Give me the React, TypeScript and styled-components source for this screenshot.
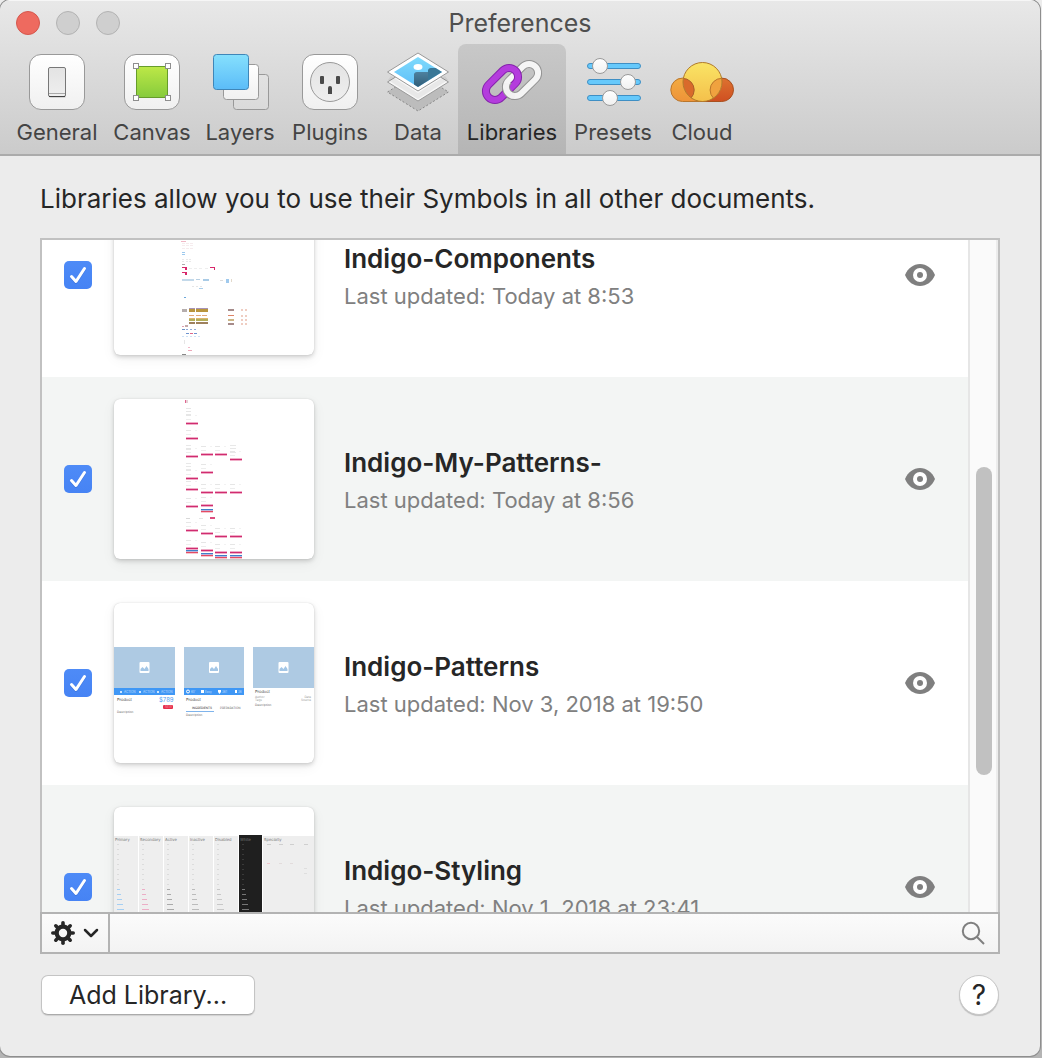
import React, { useLayoutEffect, useRef } from "react";
import styled, { createGlobalStyle } from "styled-components";

const GlobalStyle = createGlobalStyle`
  *, *::before, *::after { box-sizing: border-box; }
  body {
    margin: 0;
    font-family: Inter, "Liberation Sans", sans-serif;
    color: #262626;
    background: #b4b4b4;
  }
  button, input { font: inherit; color: inherit; }
`;

const Desktop = styled.div`
  min-height: 100vh;
  display: flex;
  padding: 0 2px 2px 0;
  background: linear-gradient(#ececec 0 50px, #b4b4b4 50px);
`;

const Window = styled.main`
  flex: 1;
  min-width: 0;
  display: flex;
  flex-direction: column;
  overflow: hidden;
  background: #ececec;
  border-radius: 10px;
  box-shadow: 0 0 0 1px #8e8e8e;
`;

const Header = styled.header`
  background: linear-gradient(#e8e8e8, #cbcbcb);
  border-top: 1px solid #f6f6f6;
  border-bottom: 2px solid #ababab;
`;

const TitleBar = styled.div`
  display: grid;
  grid-template-columns: 1fr auto 1fr;
  align-items: center;
  height: 43px;
  padding: 0 16px;
`;

const Lights = styled.div`
  display: flex;
  gap: 16px;
`;

const Light = styled.button<{ $fill: string; $edge: string }>`
  width: 24px;
  height: 24px;
  padding: 0;
  border-radius: 50%;
  border: 1px solid ${(p) => p.$edge};
  background: ${(p) => p.$fill};
`;

const WindowTitle = styled.h1`
  margin: 0;
  font-size: 25px;
  line-height: 32px;
  font-weight: 400;
  color: #4f4f4f;
`;

const Toolbar = styled.nav`
  display: flex;
  padding-left: 8px;
`;

const Tab = styled.button<{ $width: number; $active?: boolean }>`
  width: ${(p) => p.$width}px;
  height: 110px;
  padding: 6px 0 8px;
  border: 0;
  border-radius: 8px 8px 0 0;
  display: flex;
  flex-direction: column;
  align-items: center;
  gap: 4px;
  font-size: 22px;
  line-height: 28px;
  white-space: nowrap;
  color: ${(p) => (p.$active ? "#262626" : "#444444")};
  background: ${(p) => (p.$active ? "linear-gradient(#c8c8c8, #b5b5b5)" : "none")};
`;

const Content = styled.section`
  flex: 1;
  min-height: 0;
  display: flex;
  flex-direction: column;
  padding: 26px 40px 40px;
`;

const Intro = styled.p`
  margin: 0 0 22px;
  font-size: 26px;
  line-height: 34px;
`;

const ListFrame = styled.div`
  height: calc(100vh - 384px);
  min-height: 204px;
  display: flex;
  border: 2px solid #c1c1c1;
  border-bottom: 0;
  background: #ffffff;
`;

const Rows = styled.ul`
  flex: 1;
  min-width: 0;
  margin: 0;
  padding: 0;
  list-style: none;
  overflow: hidden;
`;

const Row = styled.li`
  display: flex;
  align-items: center;
  padding: 22px 33px 22px 22px;
  background: #ffffff;
  &:nth-child(even) { background: #f3f5f4; }
`;

const CheckLabel = styled.label`
  display: grid;
  margin-right: 22px;
  > * { grid-area: 1 / 1; }
  svg { pointer-events: none; }
`;

const CheckInput = styled.input`
  appearance: none;
  width: 28px;
  height: 28px;
  margin: 0;
  border-radius: 5px;
  background: #e2e2e2;
  &:checked { background: linear-gradient(#4e8bf7, #4683f4); }
`;

const Preview = styled.div`
  flex: none;
  width: 200px;
  height: 160px;
  border-radius: 6px;
  overflow: hidden;
  background: #ffffff;
  box-shadow: 0 0 1px rgba(0, 0, 0, 0.2), 0 2px 4px rgba(0, 0, 0, 0.16), 0 4px 14px rgba(0, 0, 0, 0.06);
  svg { display: block; }
`;

const Details = styled.div`
  flex: 1;
  min-width: 0;
  margin-left: 30px;
  padding-top: 2px;
`;

const Name = styled.h2`
  margin: 0;
  font-size: 26px;
  line-height: 40px;
  font-weight: 600;
`;

const Updated = styled.p`
  margin: 0;
  font-size: 22px;
  line-height: 34px;
  color: #808080;
`;

const IconButton = styled.button`
  display: flex;
  padding: 0;
  border: 0;
  background: none;
`;

const Track = styled.div`
  width: 30px;
  padding: 0 4px 0 6px;
  border-left: 2px solid #e6e6e6;
  border-right: 2px solid #ececec;
  background: #fafafa;
`;

const Knob = styled.div`
  width: 16px;
  border-radius: 8px;
  background: #c1c1c1;
`;

const Footer = styled.div`
  display: flex;
  align-items: stretch;
  height: 42px;
  border: 2px solid #b3b3b3;
  background: linear-gradient(#fbfbfb, #f3f3f3);
`;

const MenuButton = styled.button`
  display: flex;
  align-items: center;
  gap: 7px;
  width: 68px;
  padding: 0 8px;
  border: 0;
  border-right: 2px solid #b3b3b3;
  background: none;
`;

const SearchLabel = styled.label`
  flex: 1;
  display: flex;
  align-items: center;
  padding-right: 13px;
`;

const SearchInput = styled.input`
  flex: 1;
  min-width: 0;
  height: 100%;
  padding: 0 12px;
  border: 0;
  outline: 0;
  font-size: 22px;
  background: none;
`;

const Actions = styled.div`
  display: flex;
  align-items: center;
  justify-content: space-between;
  margin-top: 21px;
  padding: 0 1px;
`;

const AddButton = styled.button`
  width: 214px;
  height: 40px;
  padding: 0;
  border: 1px solid #c4c4c4;
  border-bottom-color: #ababab;
  border-radius: 7px;
  font-size: 25px;
  line-height: 38px;
  background: #ffffff;
  box-shadow: 0 1px 1px rgba(0, 0, 0, 0.12);
`;

const HelpButton = styled.button`
  width: 40px;
  height: 40px;
  padding: 0;
  border: 1px solid #c8c8c8;
  border-radius: 50%;
  font-size: 28px;
  line-height: 38px;
  background: #ffffff;
  box-shadow: 0 1px 1px rgba(0, 0, 0, 0.2);
`;

/* ---------- toolbar icons ---------- */

const ToolIcon = ({ children }: { children: React.ReactNode }) => (
  <svg width="64" height="64" viewBox="0 0 64 64" fill="none" aria-hidden="true">
    {children}
  </svg>
);

const GradientStore = styled.svg`
  position: absolute;
`;

const Gradients = () => (
  <GradientStore width="0" height="0" aria-hidden="true">
    <defs>
      {[
        ["tile", "#ffffff", "#f0f0f0"],
        ["green", "#bde847", "#86cb3c"],
        ["sky", "#86e0fd", "#5bbcf8"],
        ["back", "#e2e2e2", "#dadada"],
        ["yellow", "#fae465", "#f4c04b"],
        ["amber", "#f2ab42", "#ee9338"],
        ["rust", "#dd7230", "#cf4f21"],
        ["disc", "#e3e3e3", "#efefef"],
        ["rock", "#4e819f", "#2a5670"],
      ].map(([id, from, to]) => (
        <linearGradient key={id} id={id} x1="0" y1="0" x2="0" y2="1">
          <stop offset="0" stopColor={from} />
          <stop offset="1" stopColor={to} />
        </linearGradient>
      ))}
    </defs>
  </GradientStore>
);

const Tile = () => (
  <rect x="4.5" y="4.5" width="55" height="55" rx="11.5" fill="url(#tile)" stroke="#999" />
);

const GeneralIcon = () => (
  <ToolIcon>
    <Tile />
    <rect x="24" y="20" width="17" height="28" rx="2" fill="#000" opacity=".12" />
    <rect x="23.5" y="17.5" width="17" height="29" rx="1.5" fill="url(#disc)" stroke="#777" />
    <path d="M24 43.5h16" stroke="#aaa" />
    <path d="M24 46.5h16" stroke="#444" />
  </ToolIcon>
);

const CanvasIcon = () => (
  <ToolIcon>
    <Tile />
    <rect x="16.5" y="16.5" width="31" height="31" fill="url(#green)" stroke="#669c2b" />
    {[16, 48].map((x) =>
      [16, 48].map((y) => (
        <rect key={`${x}-${y}`} x={x - 2.5} y={y - 2.5} width="5" height="5" fill="#fff" stroke="#8e8e8e" />
      ))
    )}
  </ToolIcon>
);

const LayersIcon = () => (
  <ToolIcon>
    <rect x="25.5" y="24.5" width="35" height="35" rx="3" fill="url(#back)" stroke="#999" />
    <rect x="15.5" y="14.5" width="35" height="35" rx="3" fill="url(#tile)" stroke="#999" />
    <rect x="5.5" y="4.5" width="35" height="35" rx="3" fill="url(#sky)" stroke="#3f86b8" />
  </ToolIcon>
);

const PluginsIcon = () => (
  <ToolIcon>
    <Tile />
    <circle cx="32" cy="32" r="19.5" fill="url(#disc)" stroke="#999" />
    <rect x="22" y="26" width="4" height="8" rx="1" fill="#4a4a4a" />
    <rect x="38" y="26" width="4" height="8" rx="1" fill="#4a4a4a" />
    <path d="M30 44v-6a2 2 0 0 1 4 0v6z" fill="#4a4a4a" />
  </ToolIcon>
);

const DataIcon = () => (
  <ToolIcon>
    <path d="M1.5 42 32 23 62.5 42 32 61z" fill="#bcbcbc" stroke="#888" strokeDasharray="2 2" />
    <path d="M1.5 32 32 13 62.5 32 32 51z" fill="#f7f7f7" stroke="#999" />
    <path d="M5 26 32 43 59 26 62 30 32 49 2 30z" fill="#000" opacity=".06" />
    <path d="M1.5 22 32 3 62.5 22 32 41z" fill="#fff" stroke="#999" />
    <clipPath id="photo">
      <path d="M8 22 32 7 56 22 32 37z" />
    </clipPath>
    <g clipPath="url(#photo)">
      <rect width="64" height="40" fill="url(#sky)" />
      <path d="M42 20a3 3 0 0 1 3-2h14v14H42z" fill="#397797" />
      <path d="M28 40V24a3 3 0 0 1 3-2h11v18z" fill="url(#rock)" />
    </g>
    <ellipse cx="32" cy="17" rx="4.5" ry="3" fill="#fff" />
  </ToolIcon>
);

const Link = ({ cx, cy, fill, edge }: { cx: number; cy: number; fill: string; edge: string }) => (
  <g transform={`rotate(-45 ${cx} ${cy})`}>
    <rect x={cx - 19} y={cy - 9} width="38" height="18" rx="9" stroke={edge} strokeWidth="8" />
    <rect x={cx - 19} y={cy - 9} width="38" height="18" rx="9" stroke={fill} strokeWidth="6" />
  </g>
);

const LibrariesIcon = () => (
  <ToolIcon>
    <clipPath id="over">
      <path d="M0 33h35v31H0z" />
    </clipPath>
    <Link cx={42} cy={30} fill="#f5f5f5" edge="#929292" />
    <Link cx={22} cy={34} fill="#b43cdd" edge="#8423ab" />
    <g clipPath="url(#over)">
      <Link cx={42} cy={30} fill="#f2f2f2" edge="#929292" />
    </g>
  </ToolIcon>
);

const PresetsIcon = () => (
  <ToolIcon>
    {[[16, 19], [32, 47], [48, 29]].map(([y, x]) => (
      <g key={y}>
        <rect x="6.5" y={y - 2.5} width="53" height="5" rx="2.5" fill="#66c9fb" stroke="#3f8fc4" />
        <circle cx={x} cy={y} r="7.5" fill="url(#tile)" stroke="#999" />
      </g>
    ))}
  </ToolIcon>
);

const CloudIcon = () => (
  <ToolIcon>
    <clipPath id="sun">
      <circle cx="32.5" cy="32" r="19.5" />
    </clipPath>
    <path d="M32 51.5H12.5A11.7 11.7 0 1 1 24.2 39.8z" fill="url(#amber)" stroke="#b9762c" />
    <path d="M32 51.5h19.8A11.7 11.7 0 1 0 40.1 39.8z" fill="url(#rust)" stroke="#a9501f" />
    <circle cx="32.5" cy="32" r="19.5" fill="url(#yellow)" />
    <g clipPath="url(#sun)">
      <circle cx="12.5" cy="40" r="11.7" fill="#d96a2b" stroke="#a9602a" />
      <circle cx="51.8" cy="40" r="11.7" fill="#f0a23f" stroke="#b9762c" />
    </g>
    <circle cx="32.5" cy="32" r="19.5" stroke="#b07a2c" />
  </ToolIcon>
);

/* ---------- small glyphs ---------- */

const CheckMark = () => (
  <svg width="28" height="28" viewBox="0 0 28 28" fill="none" strokeLinecap="round" strokeLinejoin="round" aria-hidden="true">
    <path d="m7.5 16.5 4.5 5L20.500 8.500" stroke="#2c60bd" opacity=".4" strokeWidth="3" />
    <path d="m7.5 15.5 4.5 5L20.500 7.500" stroke="#fff" strokeWidth="3" />
  </svg>
);

const EyeIcon = () => (
  <svg width="30" height="22" viewBox="0 0 30 22" aria-hidden="true">
    <path d="M0 11C3 4 8.5 0 15 0s12 4 15 11c-3 7-8.500 11-15 11S3 18 0 11z" fill="#7f7f7f" />
    <circle cx="15" cy="11" r="7" fill="#fff" />
    <circle cx="15" cy="11" r="3" fill="#7f7f7f" />
  </svg>
);

const GearIcon = () => (
  <svg width="26" height="26" viewBox="-13 -13 26 26" fill="none" stroke="#262626" aria-hidden="true">
    <circle r="6.3" strokeWidth="4.2" />
    {[0, 45, 90, 135, 180, 225, 270, 315].map((a) => (
      <path key={a} d="M0-7.5v-2.7" strokeWidth="3.6" strokeLinecap="round" transform={`rotate(${a})`} />
    ))}
  </svg>
);

const ChevronIcon = () => (
  <svg width="16" height="10" viewBox="0 0 16 10" fill="none" aria-hidden="true">
    <path d="m2 2 6 6 6-6" stroke="#262626" strokeWidth="2.5" strokeLinecap="round" strokeLinejoin="round" />
  </svg>
);

const SearchIcon = () => (
  <svg width="24" height="24" viewBox="0 0 24 24" fill="none" stroke="#7f7f7f" strokeWidth="2" aria-hidden="true">
    <circle cx="10" cy="10" r="8.2" />
    <path d="m16 16 7 7" />
  </svg>
);

/* ---------- library previews ---------- */

const PreviewSvg = ({ children }: { children: React.ReactNode }) => (
  <svg width="200" height="160" viewBox="0 0 200 160" aria-hidden="true">
    {children}
  </svg>
);

const r = (x: number, y: number, w: number, h: number, fill: string) => (
  <rect key={`${x}/${y}/${fill}`} x={x} y={y} width={w} height={h} fill={fill} />
);

const ComponentsPreview = () => (
  <PreviewSvg>
    {r(67, 46, 5, 1, "#f1b9c6")}
    {[48, 50, 53].map((y) => [68, 72, 76].map((x) => r(x, y, 3, 1, "#f6ecee")))}
    {r(68, 57, 3, 1, "#9cc9ee")}
    {r(68, 59, 3, 1, "#9cc9ee")}
    {[64, 66].map((y) => [68, 72, 75].map((x) => r(x, y, 2, 1, "#e9e9e9")))}
    {r(68, 69, 3, 1, "#aaa")}
    {r(68, 72, 5, 1, "#d8286b")}
    {r(71, 73, 2, 2, "#d8286b")}
    {r(96, 72, 5, 1, "#d8286b")}
    {r(100, 73, 1, 2, "#d8286b")}
    {[75, 80, 85, 91].map((x) => r(x, 73, 3, 1, "#eeeeee"))}
    {r(68, 77, 5, 1, "#d8286b")}
    {r(71, 78, 2, 2, "#d8286b")}
    {r(68, 84, 12, 2, "#c3d9ea")}
    {r(82, 84, 4, 1, "#b7cfe3")}
    {r(89, 84, 6, 2, "#a9cbe6")}
    {r(106, 85, 3, 1, "#ddd")}
    {r(112, 84, 3, 4, "#9fc9ed")}
    {r(117, 84, 1, 3, "#e2d9cb")}
    {[78, 82, 86].map((x) => r(x, 91, 2, 1, "#e6e6e6"))}
    {r(85, 93, 4, 1, "#a8cdea")}
    {r(70, 102, 2, 1, "#6ba7da")}
    {r(68, 114, 5, 3, "#b5adad")}
    {[75, 82, 88].map((x) => (
      <g key={x}>
        {r(x, 113, 6, 1, "#a892b5")}
        {r(x, 114, 6, 3, "#b9953d")}
        {r(x, 120, 5, 1, "#e3ab79")}
        {r(x, 123, 6, 1, "#ddb66d")}
        {r(x, 124, 6, 2, "#b3ae58")}
        {r(x, 127, 6, 2, "#9e815d")}
      </g>
    ))}
    {[114, 128].map((y) => r(114, y, 6, 2, "#a68b8a"))}
    {r(114, 120, 6, 1, "#dd8366")}
    {r(114, 124, 6, 2, "#cbb584")}
    {[114, 120, 124, 128].map((y) => [127, 131].map((x) => r(x, y, 2, 2, "#efcdc2")))}
    {r(68, 131, 2, 1, "#e0a0b0")}
    {r(71, 130, 3, 2, "#c4aaaa")}
    {r(68, 134, 3, 1, "#6e93c4")}
    {[72, 76, 80].map((x) => r(x, 134, 2, 1, "#91abd8"))}
    {[72, 76, 80].map((x, i) => r(x, 138, 3, 1, i === 1 ? "#dd6688" : "#6e93cf"))}
    {[68, 72, 76, 80, 84].map((x) => r(x, 141, 2, 1, "#cfe2f5"))}
    {r(70, 145, 1, 4, "#e6e6e6")}
    {r(74, 152, 2, 1, "#f2b8c8")}
    {r(74, 155, 4, 1, "#eba7b8")}
    {r(68, 159, 4, 1, "#888")}
  </PreviewSvg>
);

const patternColumns = [
  { x: 72, pink: [24, 39, 57, 79, 90, 107, 131, 149], blue: [151], red: [153] },
  { x: 87, pink: [55, 73, 93, 106, 134, 151], blue: [110, 154], red: [112, 156] },
  { x: 101, pink: [55, 93, 137, 153], blue: [156], red: [158] },
  { x: 116, pink: [60, 93, 137, 153], blue: [156], red: [158] },
];

const MyPatternsPreview = () => (
  <PreviewSvg>
    {r(71, 1, 1, 3, "#e0658f")}
    {r(72, 1, 2, 3, "#e8cfd6")}
    {patternColumns.map((c) => (
      <g key={c.x}>
        {c.pink.map((y) => (
          <g key={y}>
            {r(c.x, y - 1, 12, 3, "#f0adc7")}
            {r(c.x, y, 12, 1, "#d02c70")}
            {r(c.x, y - 4, 5, 1, "#ededed")}
            {r(c.x, y - 8, 5, 1, "#e6e6e6")}
            {r(c.x + 9, y - 8, 2, 1, "#f2f2f2")}
          </g>
        ))}
        {c.blue.map((y) => (
          <g key={y}>
            {r(c.x, y, 12, 1, "#3f7fca")}
            {r(c.x, y + 1, 12, 1, "#b9b6dc")}
          </g>
        ))}
        {c.red.map((y) => (
          <g key={y}>
            {r(c.x, y, 12, 1, "#e54a63")}
            {r(c.x, y + 1, 12, 1, "#f7c6ce")}
          </g>
        ))}
      </g>
    ))}
    {[9, 12, 15].map((y) => r(72, y, 5, 1, "#e6e6e6"))}
    {[46, 50, 64, 67, 70].map((y) => r(72, y, 5, 1, "#e8e8e8"))}
    {[46, 49, 53].map((y) => r(116, y, 6, 1, "#e8e8e8"))}
    {r(72, 119, 4, 1, "#d8d8d8")}
    {r(85, 119, 4, 1, "#e5e5e5")}
    {r(96, 118, 5, 2, "#dc4d7f")}
  </PreviewSvg>
);

const Photo = ({ x, w }: { x: number; w: number }) => (
  <g>
    <rect x={x} y="44" width={w} height="41" fill="#aecae3" />
    <rect x={x + w / 2 - 5} y="59" width="10" height="11" rx="1" fill="#fff" />
    <path d={`M${x + w / 2 - 4} 68v-2l2-2 2 2 2-3 2 3v2z`} fill="#a3c6e6" />
  </g>
);

const PatternsPreview = () => (
  <PreviewSvg>
    <Photo x={0} w={61} />
    <Photo x={70} w={60} />
    <Photo x={139} w={61} />
    <rect x="0" y="85" width="61" height="7" fill="#3f97f5" />
    <rect x="70" y="85" width="60" height="7" fill="#3f97f5" />
    <g fontSize="3" fill="#c4defb">
      {[10, 29, 47].map((x) => <text key={x} x={x} y="90">ACTION</text>)}
      <text x="77" y="90">60'</text>
      <text x="91" y="90">Easy</text>
      <text x="108" y="90">361</text>
      <text x="124" y="90">36</text>
    </g>
    <g fill="#fff">
      {[6, 25, 43].map((x) => <circle key={x} cx={x + 1} cy="89" r="1" />)}
      <circle cx="74" cy="88.5" r="1.5" fill="none" stroke="#fff" />
      <rect x="87" y="87" width="3" height="3" />
      <path d="M104 87h3v2l-1.5 2-1.5-2z" />
      <rect x="121" y="87" width="2" height="3" />
    </g>
    <g fontSize="4" fill="#444" textRendering="geometricPrecision">
      <text x="3" y="98">Product</text>
      <text x="72" y="98">Product</text>
      <text x="141" y="90">Product</text>
    </g>
    <text x="45" y="99" fontSize="6" fill="#4f9df0">$789</text>
    <rect x="49" y="102" width="10" height="4" rx="1" fill="#e5304c" />
    <text x="51" y="105" fontSize="3" fill="#f58c9c">NEW</text>
    <g fontSize="3" fill="#666" textRendering="geometricPrecision">
      <text x="3" y="110">Description</text>
      <text x="72" y="113">Description</text>
      <text x="141" y="103">Description</text>
      <text x="78" y="106" fill="#222">INGREDIENTS</text>
      <text x="106" y="106">PREPARATION</text>
      <text x="141" y="95" fill="#999">Author</text>
      <text x="141" y="98" fill="#999">Tags</text>
      <text x="197" y="95" textAnchor="end" fill="#999">Date</text>
      <text x="197" y="98" textAnchor="end" fill="#999">Source</text>
    </g>
    <rect x="72" y="108" width="28" height="1" fill="#7fb4ec" />
  </PreviewSvg>
);

const stylingColumns = [
  { x: 0, w: 24, name: "Primary", tint: "#a5cff3" },
  { x: 25, w: 24, name: "Secondary", tint: "#ecaec6" },
  { x: 50, w: 24, name: "Active", tint: "#aaaaaa" },
  { x: 75, w: 24, name: "Inactive", tint: "#bbbbbb" },
  { x: 100, w: 24, name: "Disabled", tint: "#c8c8c8" },
  { x: 125, w: 23, name: "White", tint: "#777777" },
  { x: 149, w: 51, name: "Specialty", tint: "#e0e0e0" },
];

const StylingPreview = () => (
  <PreviewSvg>
    {stylingColumns.map((c) => {
      const dark = c.name === "White";
      return (
        <g key={c.name}>
          {r(c.x, dark ? 28 : 29, c.w, 132, dark ? "#1f1f1f" : "#eeeeee")}
          <text x={c.x + 1} y="34" fontSize="4" fill="#777" textRendering="geometricPrecision">{c.name}</text>
          {c.w < 30 &&
            [37, 42, 47, 52, 57, 62, 67, 72, 77].map((y) => r(c.x + 3, y, 2, 1, dark ? "#3a3a3a" : "#dcdcdc"))}
          {c.w < 30 &&
            [82, 87, 92, 97, 102].map((y, i) => r(c.x + 3, y, 3 + i, 1, c.tint))}
        </g>
      );
    })}
    {[153, 165, 176, 190].map((x) => r(x, 37, 4, 1, "#cfcfcf"))}
    {r(153, 56, 3, 1, "#f0c8ce")}
    {[165, 176].map((x) => r(x, 56, 3, 1, "#e2dcdc"))}
    {[61, 66].map((y) => r(190, y, 3, 1, "#dedede"))}
  </PreviewSvg>
);

/* ---------- data ---------- */

const tabs = [
  { label: "General", width: 98, Icon: GeneralIcon },
  { label: "Canvas", width: 92, Icon: CanvasIcon },
  { label: "Layers", width: 84, Icon: LayersIcon },
  { label: "Plugins", width: 96, Icon: PluginsIcon },
  { label: "Data", width: 80, Icon: DataIcon },
  { label: "Libraries", width: 108, Icon: LibrariesIcon },
  { label: "Presets", width: 94, Icon: PresetsIcon },
  { label: "Cloud", width: 84, Icon: CloudIcon },
];

const libraries = [
  { name: "Indigo-Components", updated: "Today at 8:53", Art: ComponentsPreview },
  { name: "Indigo-My-Patterns-", updated: "Today at 8:56", Art: MyPatternsPreview },
  { name: "Indigo-Patterns", updated: "Nov 3, 2018 at 19:50", Art: PatternsPreview },
  { name: "Indigo-Styling", updated: "Nov 1, 2018 at 23:41", Art: StylingPreview },
];

const initialScroll = 67;
const knob = { start: 227, length: 308 };

export default function App() {
  const rows = useRef<HTMLUListElement>(null);
  useLayoutEffect(() => {
    if (rows.current) rows.current.scrollTop = initialScroll;
  }, []);

  return (
    <>
      <GlobalStyle />
      <Gradients />
      <Desktop>
        <Window>
          <Header>
            <TitleBar>
              <Lights>
                <Light $fill="#ee6a5f" $edge="#d5574d" aria-label="Close" />
                <Light $fill="#cfcfcf" $edge="#b3b3b3" aria-label="Minimize" />
                <Light $fill="#cfcfcf" $edge="#b3b3b3" aria-label="Zoom" />
              </Lights>
              <WindowTitle>Preferences</WindowTitle>
            </TitleBar>
            <Toolbar>
              {tabs.map(({ label, width, Icon }) => (
                <Tab key={label} $width={width} $active={label === "Libraries"}>
                  <Icon />
                  {label}
                </Tab>
              ))}
            </Toolbar>
          </Header>
          <Content>
            <Intro>Libraries allow you to use their Symbols in all other documents.</Intro>
            <ListFrame>
              <Rows ref={rows}>
                {libraries.map(({ name, updated, Art }) => (
                  <Row key={name}>
                    <CheckLabel>
                      <CheckInput type="checkbox" defaultChecked aria-label={name} />
                      <CheckMark />
                    </CheckLabel>
                    <Preview>
                      <Art />
                    </Preview>
                    <Details>
                      <Name>{name}</Name>
                      <Updated>Last updated: {updated}</Updated>
                    </Details>
                    <IconButton aria-label={`Show ${name}`}>
                      <EyeIcon />
                    </IconButton>
                  </Row>
                ))}
              </Rows>
              <Track>
                <Knob style={{ marginTop: knob.start, height: knob.length }} />
              </Track>
            </ListFrame>
            <Footer>
              <MenuButton aria-label="Library options">
                <GearIcon />
                <ChevronIcon />
              </MenuButton>
              <SearchLabel>
                <SearchInput type="text" aria-label="Search libraries" />
                <SearchIcon />
              </SearchLabel>
            </Footer>
            <Actions>
              <AddButton>Add Library...</AddButton>
              <HelpButton aria-label="Help">?</HelpButton>
            </Actions>
          </Content>
        </Window>
      </Desktop>
    </>
  );
}
